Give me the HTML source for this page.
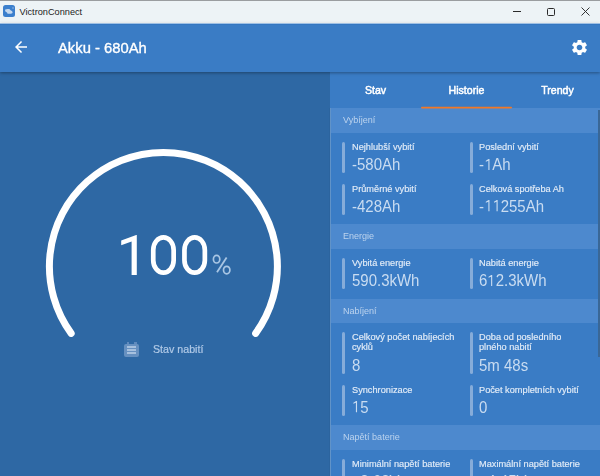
<!DOCTYPE html>
<html><head><meta charset="utf-8">
<style>
*{margin:0;padding:0;box-sizing:border-box}
html,body{width:600px;height:476px;overflow:hidden;background:#2e68a4;font-family:"Liberation Sans",sans-serif;position:relative}
.x{position:absolute;white-space:nowrap}
.r{position:absolute}
</style></head><body>
<div class="r" style="left:0;top:0;width:600px;height:23px;background:#edf3f6"></div><div class="r" style="left:0;top:0;width:600px;height:1px;background:#9a9da0"></div><div class="r" style="left:0;top:22px;width:600px;height:1px;background:#f5f9fb"></div><div class="r" style="left:3px;top:5px;width:12px;height:12px;border-radius:2.5px;background:#3b7fcd"></div><svg class="r" style="left:0;top:0" width="20" height="22"><path d="M5.2 9.6Q6 9 8.5 9.1Q10 9.2 10.5 10.3Q12.3 10.8 12.7 12.2Q12.5 13.6 11 13.8L8 13.8Q7.2 13.6 7 12.4Q5.4 12 5.1 11Z" fill="#c4d8ef"/><rect x="12.3" y="7.3" width="1.4" height="1.4" fill="#8fb4e0"/></svg><div class="x" style="left:19.5px;top:7.61px;font-size:9.2px;line-height:9.2px;color:#1c1c1c;font-weight:400;">VictronConnect</div>
<div class="r" style="left:513px;top:11px;width:8px;height:1px;background:#2a2a2a"></div><div class="r" style="left:547px;top:7.5px;width:8px;height:8px;border:1px solid #2a2a2a;border-radius:1.5px"></div><svg class="r" style="left:581px;top:7px" width="9" height="9" viewBox="0 0 9 9"><path d="M0.5 0.5L8.5 8.5M8.5 0.5L0.5 8.5" stroke="#2a2a2a" stroke-width="0.95"/></svg><div class="r" style="left:0;top:23px;width:600px;height:49px;background:#3a7cc5;box-shadow:0 1px 3px rgba(0,0,0,.35);z-index:3"><svg class="r" style="left:12.4px;top:15.1px" width="18" height="18" viewBox="0 0 24 24"><path fill="#fff" d="M20 11H7.83l5.59-5.59L12 4l-8 8 8 8 1.41-1.41L7.83 13H20v-2z"/></svg><div class="x" style="left:58px;top:17.20px;font-size:15px;line-height:15px;color:#fff;font-weight:400;transform:scaleX(0.985);transform-origin:0 0;-webkit-text-stroke:0.35px #fff;">Akku - 680Ah</div>
<svg class="r" style="left:569.8px;top:15.05px" width="19" height="19" viewBox="0 0 24 24"><path fill="#fff" d="M19.14 12.94c.04-.3.06-.61.06-.94 0-.32-.02-.64-.07-.94l2.03-1.58c.18-.14.23-.41.12-.61l-1.92-3.32c-.12-.22-.37-.29-.59-.22l-2.39.96c-.5-.38-1.03-.7-1.62-.94l-.36-2.540c-.04-.24-.24-.41-.48-.41h-3.84c-.24 0-.43.17-.47.41l-.36 2.54c-.59.24-1.13.57-1.62.94l-2.39-.96c-.22-.08-.47 0-.59.22L2.74 8.87c-.12.21-.08.47.12.61l2.03 1.58c-.05.3-.09.63-.09.94s.02.64.07.94l-2.03 1.58c-.18.14-.23.41-.12.61l1.92 3.32c.12.22.37.29.59.22l2.39-.96c.5.38 1.03.7 1.62.94l.36 2.54c.05.24.24.41.48.41h3.84c.24 0 .44-.17.47-.41l.36-2.54c.59-.24 1.13-.56 1.62-.94l2.39.96c.22.08.47 0 .59-.22l1.92-3.32c.12-.22.07-.47-.12-.61l-2.01-1.58zM12 15.6c-1.98 0-3.6-1.62-3.6-3.6s1.62-3.6 3.6-3.6 3.6 1.62 3.6 3.6-1.62 3.6-3.6 3.6z"/></svg></div><div class="r" style="left:0;top:23px;width:600px;height:1px;background:#9fc0e4;z-index:4"></div><div class="r" style="left:0;top:24px;width:600px;height:1px;background:#3476c0;z-index:4"></div><svg class="r" style="left:0;top:0" width="330" height="476"><defs><filter id="bl" x="-10%" y="-10%" width="120%" height="120%"><feGaussianBlur stdDeviation="0.45"/></filter></defs><path filter="url(#bl)" d="M71.17 333.41A114 114 0 1 1 255.63 333.41" fill="none" stroke="#fff" stroke-width="7" stroke-linecap="round"/></svg><svg class="r" style="left:0;top:0" width="330" height="476"><path fill="#fff" d="M136.8 235.1V275H131.6V241.5L121.2 245.2V240.6L136.2 235.1Z"/><rect x="153.25" y="237.45" width="20.4" height="35.2" rx="10.2" ry="12.5" fill="none" stroke="#fff" stroke-width="4.7"/><rect x="184.45" y="237.45" width="20.4" height="35.2" rx="10.2" ry="12.5" fill="none" stroke="#fff" stroke-width="4.7"/><g fill="none" stroke="#a9c6e4" stroke-width="1.7"><ellipse cx="216.6" cy="259.2" rx="3.2" ry="3.8"/><ellipse cx="226.7" cy="270.1" rx="3.2" ry="3.8"/><path d="M226.6 257.6L217 272.2" stroke-width="1.8"/></g></svg><div class="r" style="left:124px;top:343.5px;width:15.3px;height:13.5px;background:#6690c0;border-radius:2px"></div><div class="r" style="left:126.7px;top:342.3px;width:2.3px;height:1.6px;background:#5f8abd"></div><div class="r" style="left:134.2px;top:342.3px;width:2.5px;height:1.6px;background:#5f8abd"></div><div class="r" style="left:127px;top:346.3px;width:9.3px;height:1.7px;background:#a6c0de"></div><div class="r" style="left:127px;top:349.3px;width:9.3px;height:1.7px;background:#a6c0de"></div><div class="r" style="left:127px;top:352.2px;width:9.3px;height:1.7px;background:#a6c0de"></div><div class="x" style="left:153.3px;top:343.89px;font-size:11px;line-height:11px;color:#b0c9e6;font-weight:400;transform:scaleX(0.97);transform-origin:0 0;-webkit-text-stroke:0.2px #b0c9e6;">Stav nabití</div>
<div class="r" style="left:330px;top:72px;width:270px;height:404px;background:#3a7cc5"></div><div class="x" style="left:330.0px;top:80px;width:91px;text-align:center;font-size:11px;line-height:20px;color:#fff;font-weight:400;-webkit-text-stroke:0.5px #fff;transform:scaleX(0.96)">Stav</div><div class="x" style="left:421.0px;top:80px;width:91px;text-align:center;font-size:11px;line-height:20px;color:#fff;font-weight:400;-webkit-text-stroke:0.5px #fff;transform:scaleX(0.96)">Historie</div><div class="x" style="left:512.0px;top:80px;width:91px;text-align:center;font-size:11px;line-height:20px;color:#fff;font-weight:400;-webkit-text-stroke:0.5px #fff;transform:scaleX(0.96)">Trendy</div><svg class="r" style="left:0;top:0;z-index:2" width="600" height="120"><rect x="421" y="106.7" width="91" height="1.8" rx="0.9" fill="#f27826"/></svg><div class="r" style="left:330px;top:108px;width:270px;height:25px;background:#4d89ce"></div><div class="x" style="left:342.7px;top:115.26px;font-size:9.5px;line-height:9.5px;color:#bcd3ee;font-weight:400;transform:scaleX(0.95);transform-origin:0 0;">Vybíjení</div>
<div class="r" style="left:342.0px;top:142px;width:3.2px;height:31px;background:#86acd9;border-radius:1.6px"></div><div class="x" style="left:351.5px;top:142.27px;font-size:9.6px;line-height:9.6px;color:#e3ecf7;font-weight:400;transform:scaleX(0.96);transform-origin:0 0;-webkit-text-stroke:0.15px #e3ecf7;">Nejhlubší vybití</div>
<div class="x" style="left:351.5px;top:156.03px;font-size:16.5px;line-height:16.5px;color:#c9dcf1;font-weight:400;transform:scaleX(0.908);transform-origin:0 0;">-580Ah</div>
<div class="r" style="left:469.5px;top:142px;width:3.2px;height:31px;background:#86acd9;border-radius:1.6px"></div><div class="x" style="left:479.0px;top:142.27px;font-size:9.6px;line-height:9.6px;color:#e3ecf7;font-weight:400;transform:scaleX(0.96);transform-origin:0 0;-webkit-text-stroke:0.15px #e3ecf7;">Poslední vybití</div>
<div class="x" style="left:479.0px;top:156.03px;font-size:16.5px;line-height:16.5px;color:#c9dcf1;font-weight:400;transform:scaleX(0.908);transform-origin:0 0;">-<svg viewBox="0 0 1139 1409" style="width:0.556em;height:0.688em;vertical-align:baseline"><path fill="currentColor" d="M690 1409H535V224L185 349V209L560 0H690Z"/></svg>Ah</div>
<div class="r" style="left:342.0px;top:183.5px;width:3.2px;height:31.5px;background:#86acd9;border-radius:1.6px"></div><div class="x" style="left:351.5px;top:183.77px;font-size:9.6px;line-height:9.6px;color:#e3ecf7;font-weight:400;transform:scaleX(0.96);transform-origin:0 0;-webkit-text-stroke:0.15px #e3ecf7;">Průměrné vybití</div>
<div class="x" style="left:351.5px;top:197.53px;font-size:16.5px;line-height:16.5px;color:#c9dcf1;font-weight:400;transform:scaleX(0.908);transform-origin:0 0;">-428Ah</div>
<div class="r" style="left:469.5px;top:183.5px;width:3.2px;height:31.5px;background:#86acd9;border-radius:1.6px"></div><div class="x" style="left:479.0px;top:183.77px;font-size:9.6px;line-height:9.6px;color:#e3ecf7;font-weight:400;transform:scaleX(0.96);transform-origin:0 0;-webkit-text-stroke:0.15px #e3ecf7;">Celková spotřeba Ah</div>
<div class="x" style="left:479.0px;top:197.53px;font-size:16.5px;line-height:16.5px;color:#c9dcf1;font-weight:400;transform:scaleX(0.908);transform-origin:0 0;">-<svg viewBox="0 0 1139 1409" style="width:0.556em;height:0.688em;vertical-align:baseline"><path fill="currentColor" d="M690 1409H535V224L185 349V209L560 0H690Z"/></svg><svg viewBox="0 0 1139 1409" style="width:0.556em;height:0.688em;vertical-align:baseline"><path fill="currentColor" d="M690 1409H535V224L185 349V209L560 0H690Z"/></svg>255Ah</div>
<div class="r" style="left:330px;top:224px;width:270px;height:24.5px;background:#4d89ce"></div><div class="x" style="left:342.7px;top:231.26px;font-size:9.5px;line-height:9.5px;color:#bcd3ee;font-weight:400;transform:scaleX(0.95);transform-origin:0 0;">Energie</div>
<div class="r" style="left:342.0px;top:258px;width:3.2px;height:31px;background:#86acd9;border-radius:1.6px"></div><div class="x" style="left:351.5px;top:258.27px;font-size:9.6px;line-height:9.6px;color:#e3ecf7;font-weight:400;transform:scaleX(0.96);transform-origin:0 0;-webkit-text-stroke:0.15px #e3ecf7;">Vybitá energie</div>
<div class="x" style="left:351.5px;top:272.03px;font-size:16.5px;line-height:16.5px;color:#c9dcf1;font-weight:400;transform:scaleX(0.908);transform-origin:0 0;">590.3kWh</div>
<div class="r" style="left:469.5px;top:258px;width:3.2px;height:31px;background:#86acd9;border-radius:1.6px"></div><div class="x" style="left:479.0px;top:258.27px;font-size:9.6px;line-height:9.6px;color:#e3ecf7;font-weight:400;transform:scaleX(0.96);transform-origin:0 0;-webkit-text-stroke:0.15px #e3ecf7;">Nabitá energie</div>
<div class="x" style="left:479.0px;top:272.03px;font-size:16.5px;line-height:16.5px;color:#c9dcf1;font-weight:400;transform:scaleX(0.908);transform-origin:0 0;">6<svg viewBox="0 0 1139 1409" style="width:0.556em;height:0.688em;vertical-align:baseline"><path fill="currentColor" d="M690 1409H535V224L185 349V209L560 0H690Z"/></svg>2.3kWh</div>
<div class="r" style="left:330px;top:298.5px;width:270px;height:24.5px;background:#4d89ce"></div><div class="x" style="left:342.7px;top:305.76px;font-size:9.5px;line-height:9.5px;color:#bcd3ee;font-weight:400;transform:scaleX(0.95);transform-origin:0 0;">Nabíjení</div>
<div class="r" style="left:342.0px;top:332px;width:3.2px;height:42px;background:#86acd9;border-radius:1.6px"></div><div class="x" style="left:351.5px;top:332.17px;font-size:9.6px;line-height:9.6px;color:#e3ecf7;font-weight:400;transform:scaleX(0.96);transform-origin:0 0;-webkit-text-stroke:0.15px #e3ecf7;">Celkový počet nabíjecích</div>
<div class="x" style="left:351.5px;top:342.37px;font-size:9.6px;line-height:9.6px;color:#e3ecf7;font-weight:400;transform:scaleX(0.96);transform-origin:0 0;-webkit-text-stroke:0.15px #e3ecf7;">cyklů</div>
<div class="x" style="left:351.5px;top:357.13px;font-size:16.5px;line-height:16.5px;color:#c9dcf1;font-weight:400;transform:scaleX(0.908);transform-origin:0 0;">8</div>
<div class="r" style="left:469.5px;top:332px;width:3.2px;height:42px;background:#86acd9;border-radius:1.6px"></div><div class="x" style="left:479.0px;top:332.17px;font-size:9.6px;line-height:9.6px;color:#e3ecf7;font-weight:400;transform:scaleX(0.96);transform-origin:0 0;-webkit-text-stroke:0.15px #e3ecf7;">Doba od posledního</div>
<div class="x" style="left:479.0px;top:342.37px;font-size:9.6px;line-height:9.6px;color:#e3ecf7;font-weight:400;transform:scaleX(0.96);transform-origin:0 0;-webkit-text-stroke:0.15px #e3ecf7;">plného nabití</div>
<div class="x" style="left:479.0px;top:357.13px;font-size:16.5px;line-height:16.5px;color:#c9dcf1;font-weight:400;transform:scaleX(0.908);transform-origin:0 0;">5m 48s</div>
<div class="r" style="left:342.0px;top:384.5px;width:3.2px;height:31.5px;background:#86acd9;border-radius:1.6px"></div><div class="x" style="left:351.5px;top:384.77px;font-size:9.6px;line-height:9.6px;color:#e3ecf7;font-weight:400;transform:scaleX(0.96);transform-origin:0 0;-webkit-text-stroke:0.15px #e3ecf7;">Synchronizace</div>
<div class="x" style="left:351.5px;top:398.53px;font-size:16.5px;line-height:16.5px;color:#c9dcf1;font-weight:400;transform:scaleX(0.908);transform-origin:0 0;"><svg viewBox="0 0 1139 1409" style="width:0.556em;height:0.688em;vertical-align:baseline"><path fill="currentColor" d="M690 1409H535V224L185 349V209L560 0H690Z"/></svg>5</div>
<div class="r" style="left:469.5px;top:384.5px;width:3.2px;height:31.5px;background:#86acd9;border-radius:1.6px"></div><div class="x" style="left:479.0px;top:384.77px;font-size:9.6px;line-height:9.6px;color:#e3ecf7;font-weight:400;transform:scaleX(0.96);transform-origin:0 0;-webkit-text-stroke:0.15px #e3ecf7;">Počet kompletních vybití</div>
<div class="x" style="left:479.0px;top:398.53px;font-size:16.5px;line-height:16.5px;color:#c9dcf1;font-weight:400;transform:scaleX(0.908);transform-origin:0 0;">0</div>
<div class="r" style="left:330px;top:425px;width:270px;height:25px;background:#4d89ce"></div><div class="x" style="left:342.7px;top:432.26px;font-size:9.5px;line-height:9.5px;color:#bcd3ee;font-weight:400;transform:scaleX(0.95);transform-origin:0 0;">Napětí baterie</div>
<div class="r" style="left:342.0px;top:459px;width:3.2px;height:31px;background:#86acd9;border-radius:1.6px"></div><div class="x" style="left:351.5px;top:459.27px;font-size:9.6px;line-height:9.6px;color:#e3ecf7;font-weight:400;transform:scaleX(0.96);transform-origin:0 0;-webkit-text-stroke:0.15px #e3ecf7;">Minimální napětí baterie</div>
<div class="x" style="left:351.5px;top:473.03px;font-size:16.5px;line-height:16.5px;color:#c9dcf1;font-weight:400;transform:scaleX(0.908);transform-origin:0 0;"><svg viewBox="0 0 1139 1409" style="width:0.556em;height:0.688em;vertical-align:baseline"><path fill="currentColor" d="M690 1409H535V224L185 349V209L560 0H690Z"/></svg>2.62V</div>
<div class="r" style="left:469.5px;top:459px;width:3.2px;height:31px;background:#86acd9;border-radius:1.6px"></div><div class="x" style="left:479.0px;top:459.27px;font-size:9.6px;line-height:9.6px;color:#e3ecf7;font-weight:400;transform:scaleX(0.96);transform-origin:0 0;-webkit-text-stroke:0.15px #e3ecf7;">Maximální napětí baterie</div>
<div class="x" style="left:479.0px;top:473.03px;font-size:16.5px;line-height:16.5px;color:#c9dcf1;font-weight:400;transform:scaleX(0.908);transform-origin:0 0;"><svg viewBox="0 0 1139 1409" style="width:0.556em;height:0.688em;vertical-align:baseline"><path fill="currentColor" d="M690 1409H535V224L185 349V209L560 0H690Z"/></svg>4.45V</div>
<div class="r" style="left:329px;top:108px;width:1px;height:368px;background:#2c649e"></div><div class="r" style="left:330px;top:108px;width:1px;height:368px;background:#6193c8"></div><div class="r" style="left:598px;top:110px;width:2px;height:247px;background:#3a6796"></div></body></html>
